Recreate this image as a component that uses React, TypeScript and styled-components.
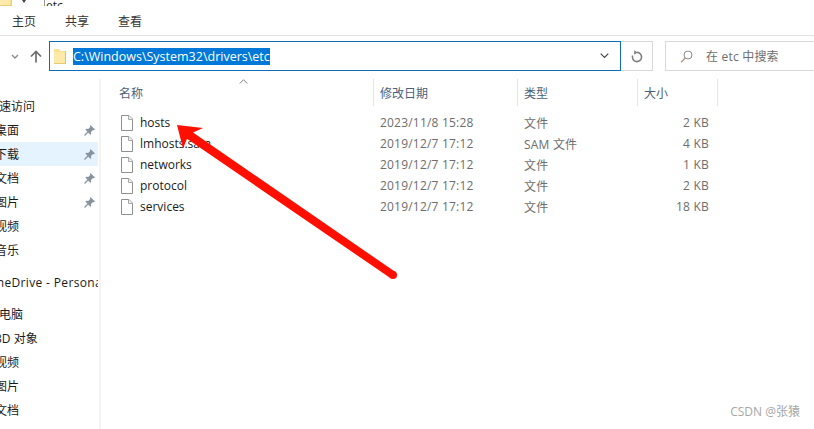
import styled, { createGlobalStyle } from 'styled-components'

const quickAccess = [
	{ label: '快速访问', indent: -13 },
	{ label: '桌面', indent: -5, pinned: true },
	{ label: '下载', indent: -5, pinned: true, active: true },
	{ label: '文档', indent: -5, pinned: true },
	{ label: '图片', indent: -5, pinned: true },
	{ label: '视频', indent: -5 },
	{ label: '音乐', indent: -5 },
]

const computer = [
	{ label: '此电脑', indent: -13 },
	{ label: '3D 对象', indent: -5 },
	{ label: '视频', indent: -5 },
	{ label: '图片', indent: -5 },
	{ label: '文档', indent: -5 },
]

const files = [
	{ name: 'hosts', date: '2023/11/8 15:28', type: '文件', size: '2 KB' },
	{ name: 'lmhosts.sam', date: '2019/12/7 17:12', type: 'SAM 文件', size: '4 KB' },
	{ name: 'networks', date: '2019/12/7 17:12', type: '文件', size: '1 KB' },
	{ name: 'protocol', date: '2019/12/7 17:12', type: '文件', size: '2 KB' },
	{ name: 'services', date: '2019/12/7 17:12', type: '文件', size: '18 KB' },
]

const FolderIcon = ({ width, height }: { width: number; height: number }) => (
	<svg width={width} height={height} viewBox='0 0 12 16'>
		<path d='M0 1h5l1 2h6v13H0z' fill='#fbe08f' />
		<path d='M0 4h12v12H0z' fill='#fde9a8' />
		<path d='M11.5 3v13' stroke='#e0c060' />
		<path d='M0 15.5h12' stroke='#e6ca70' />
	</svg>
)

const FileIcon = () => (
	<svg width='12' height='16' viewBox='0 0 12 16'>
		<path d='M.5.5h7.500l3.500 3.500v11.500H.5z' fill='#fff' stroke='#8f8f8f' />
		<path d='M7.500.5v4h4' fill='#eee' stroke='#a8a8a8' />
	</svg>
)

const PinIcon = () => (
	<svg width='11' height='11' viewBox='0 0 11 11'>
		<path d='M6.500 0L11 4.500l-1 .7-1-.2-2 2 .2 2.200-.9.6-4.800-5 .5-1 2.200.2 2-2-.2-1z' fill='#87949f' />
		<path d='M4 7L.5 10.500' stroke='#87949f' strokeWidth='1.200' />
	</svg>
)

export default function App() {
	return (
		<>
			<GlobalStyle />
			<Window>
				<TitleBar>
					<FolderIcon width={12} height={15} />
					<TitleChevron />
					<TitleDivider />
					<TitleText>etc</TitleText>
				</TitleBar>
				<Ribbon>
					<RibbonTab>主页</RibbonTab>
					<RibbonTab>共享</RibbonTab>
					<RibbonTab>查看</RibbonTab>
				</Ribbon>
				<AddressRow>
					<NavButtons>
						<svg width='8' height='5' viewBox='0 0 8 5'>
							<path d='M1 1l3 3 3-3' fill='none' stroke='#8a8a8a' strokeWidth='1.4' />
						</svg>
						<svg width='12' height='13' viewBox='0 0 12 13'>
							<path d='M6 12.500V1.500M1 6.500l5-5 5 5' fill='none' stroke='#6e6e6e' strokeWidth='1.7' />
						</svg>
					</NavButtons>
					<AddressInput>
						<FolderIcon width={12} height={16} />
						<SelectedPath>C:\Windows\System32\drivers\etc</SelectedPath>
						<AddressChevron>
							<svg width='9' height='6' viewBox='0 0 9 6'>
								<path d='M.7.7l3.800 3.800L8.300.7' fill='none' stroke='#404040' strokeWidth='1.1' />
							</svg>
						</AddressChevron>
					</AddressInput>
					<RefreshButton>
						<svg width='12' height='13' viewBox='0 0 12 13'>
							<path d='M6 2.400a4.600 4.600 0 1 1-4.400 3.200' fill='none' stroke='#7d7d7d' strokeWidth='1.6' />
							<path d='M3.200.2l3.400 2.300-3.400 2.300z' fill='#7d7d7d' />
						</svg>
					</RefreshButton>
					<SearchBox>
						<svg width='13' height='13' viewBox='0 0 13 13'>
							<circle cx='8' cy='5' r='4' fill='none' stroke='#8a8a8a' />
							<path d='M5.200 8L1 12.400' stroke='#b08a70' strokeWidth='1.2' />
						</svg>
						<SearchText>在 etc 中搜索</SearchText>
					</SearchBox>
				</AddressRow>
				<Body>
					<Sidebar>
						{quickAccess.map(item => (
							<NavRow key={item.label} $active={item.active}>
								<NavLabel $indent={item.indent}>{item.label}</NavLabel>
								{item.pinned && (
									<PinSlot>
										<PinIcon />
									</PinSlot>
								)}
							</NavRow>
						))}
						<DriveRow>
							<DriveLabel $indent={-13}>OneDrive - Personal</DriveLabel>
						</DriveRow>
						{computer.map(item => (
							<NavRow key={item.label}>
								<NavLabel $indent={item.indent}>{item.label}</NavLabel>
							</NavRow>
						))}
					</Sidebar>
					<Main>
						<HeaderRow>
							<HeaderCell $first>
								名称
								<SortMark>
									<svg width='9' height='5' viewBox='0 0 9 5'>
										<path d='M.7 4.500l3.800-3.800 3.800 3.800' fill='none' stroke='#808080' />
									</svg>
								</SortMark>
							</HeaderCell>
							<HeaderCell>修改日期</HeaderCell>
							<HeaderCell>类型</HeaderCell>
							<HeaderCell>大小</HeaderCell>
						</HeaderRow>
						<FileList>
							{files.map(file => (
								<FileRow key={file.name}>
									<NameCell>
										<FileIcon />
										{file.name}
									</NameCell>
									<MetaCell>{file.date}</MetaCell>
									<MetaCell>{file.type}</MetaCell>
									<SizeCell>{file.size}</SizeCell>
								</FileRow>
							))}
						</FileList>
					</Main>
				</Body>
				<Arrow width='814' height='429' viewBox='0 0 814 429'>
					<path d='M177 125l26 3-10 4.500 202.500 139.600-4.500 6.400-204-139.700-4 9.700z' fill='#ff0f00' />
					<circle cx='393' cy='275' r='4' fill='#ff0f00' />
				</Arrow>
				<Watermark>CSDN @张猿</Watermark>
			</Window>
		</>
	)
}

const GlobalStyle = createGlobalStyle`
	html, body {
		margin: 0;
		padding: 0;
		background: #fff;
	}
	body {
		font-family: 'Open Sans', 'Noto Sans CJK SC', sans-serif;
		font-size: 12px;
		color: #1a1a1a;
	}
`

const Window = styled.div`
	position: relative;
	display: flex;
	flex-direction: column;
	width: 814px;
	height: 429px;
	overflow: hidden;
	background: #fff;
`

const TitleBar = styled.div`
	display: flex;
	align-items: flex-end;
	height: 6px;
	margin-bottom: 2px;
	overflow: hidden;
	flex-shrink: 0;
`

const TitleChevron = styled.span`
	width: 0;
	height: 0;
	margin: 0 0 3px 10px;
	border-left: 2px solid transparent;
	border-right: 2px solid transparent;
	border-top: 3px solid #444;
`

const TitleDivider = styled.span`
	width: 1px;
	height: 6px;
	margin-left: 18px;
	background: #999;
`

const TitleText = styled.span`
	margin-left: 1px;
	line-height: 12px;
	height: 12px;
	transform: translateY(6px);
	font-size: 12px;
`

const Ribbon = styled.div`
	display: flex;
	gap: 29px;
	height: 25px;
	padding: 0 0 2px 12px;
	align-items: center;
	border-bottom: 1px solid #e3e3e3;
	box-sizing: content-box;
	flex-shrink: 0;
`

const RibbonTab = styled.span`
	width: 24px;
	white-space: nowrap;
	font-size: 12px;
	color: #333;
`

const AddressRow = styled.div`
	display: flex;
	align-items: stretch;
	height: 30px;
	margin-top: 5px;
	flex-shrink: 0;
`

const NavButtons = styled.div`
	display: flex;
	align-items: center;
	gap: 11px;
	width: 49px;
	padding-left: 11px;
	box-sizing: border-box;
`

const AddressInput = styled.div`
	display: flex;
	align-items: center;
	width: 572px;
	padding-left: 4px;
	box-sizing: border-box;
	border: 1px solid #0f6cb5;
`

const SelectedPath = styled.span`
	margin-left: 7px;
	width: 197px;
	height: 17px;
	line-height: 17px;
	font-size: 12.5px;
	white-space: nowrap;
	overflow: hidden;
	background: #0078d7;
	color: #fff;
`

const AddressChevron = styled.span`
	display: flex;
	margin-left: auto;
	margin-right: 11px;
`

const RefreshButton = styled.div`
	display: flex;
	align-items: center;
	justify-content: center;
	width: 32px;
	padding-left: 1px;
	box-sizing: border-box;
	border: 1px solid #d9d9d9;
	border-left: none;
`

const SearchBox = styled.div`
	display: flex;
	align-items: center;
	flex: 1;
	margin-left: 12px;
	padding-left: 14px;
	border: 1px solid #d9d9d9;
	border-right: none;
	color: #6d6d6d;
`

const SearchText = styled.span`
	margin-left: 13px;
	font-size: 12px;
	letter-spacing: 0.2px;
	white-space: nowrap;
`

const Body = styled.div`
	display: flex;
	flex: 1;
	min-height: 0;
	margin-top: 8px;
`

const Sidebar = styled.nav`
	width: 101px;
	padding: 15px 0 0;
	box-sizing: border-box;
	border-right: 2px solid #f3f3f3;
	flex-shrink: 0;
	overflow: hidden;
`

const NavRow = styled.div<{ $active?: boolean }>`
	display: flex;
	align-items: center;
	height: 24px;
	width: 98px;
	overflow: hidden;
	background: ${({ $active }) => ($active ? '#e5f3ff' : 'transparent')};
`

const DriveRow = styled(NavRow)`
	margin: 8px 0;
`

const NavLabel = styled.span<{ $indent: number }>`
	margin-left: ${({ $indent }) => $indent}px;
	white-space: nowrap;
	font-size: 12px;
	color: #1a1a1a;
`

const DriveLabel = styled(NavLabel)`
	letter-spacing: 0.35px;
`

const PinSlot = styled.span`
	display: flex;
	margin-left: auto;
	margin-right: 3px;
`

const Main = styled.main`
	flex: 1;
	min-width: 0;
`

const columns = '273px 144px 120px 80px'

const HeaderRow = styled.div`
	display: grid;
	grid-template-columns: ${columns};
	height: 27px;
`

const HeaderCell = styled.div<{ $first?: boolean }>`
	position: relative;
	display: flex;
	align-items: center;
	padding-left: ${({ $first }) => ($first ? '18px' : '6px')};
	border-right: 1px solid #e5e5e5;
	color: #4c607a;
	font-size: 12px;
`

const SortMark = styled.span`
	position: absolute;
	top: 0;
	left: 138px;
	display: flex;
`

const FileList = styled.div`
	padding-top: 6px;
`

const FileRow = styled.div`
	display: grid;
	grid-template-columns: ${columns};
	height: 21px;
	align-items: center;
`

const NameCell = styled.div`
	display: flex;
	align-items: center;
	gap: 7px;
	padding-left: 20px;
	color: #1a1a1a;
	font-size: 12px;
`

const MetaCell = styled.div`
	padding-left: 6px;
	color: #6d6d6d;
	font-size: 12px;
	letter-spacing: 0.2px;
	white-space: nowrap;
`

const SizeCell = styled(MetaCell)`
	padding: 0 9px 0 0;
	text-align: right;
`

const Arrow = styled.svg`
	position: absolute;
	inset: 0;
	pointer-events: none;
`

const Watermark = styled.span`
	position: absolute;
	right: 14px;
	bottom: 9px;
	color: #a6a6a6;
	font-size: 12px;
	white-space: nowrap;
`
